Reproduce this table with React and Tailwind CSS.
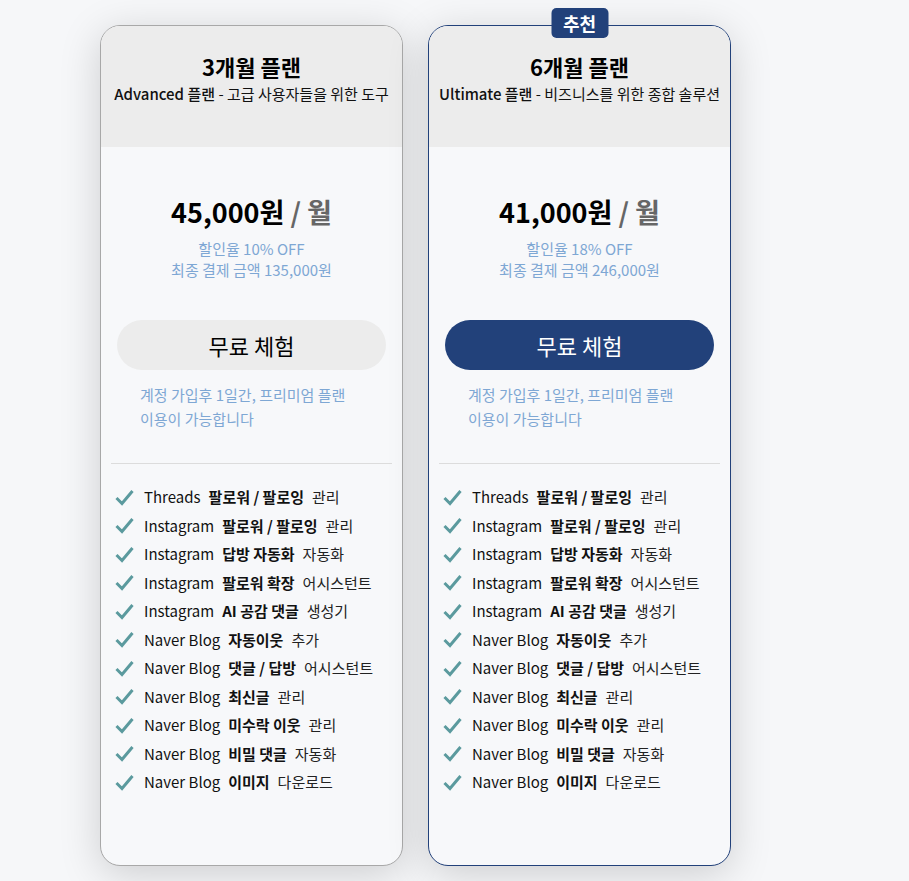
import React from "react";

const features = [
  ["Threads", "팔로워 / 팔로잉", "관리"],
  ["Instagram", "팔로워 / 팔로잉", "관리"],
  ["Instagram", "답방 자동화", "자동화"],
  ["Instagram", "팔로워 확장", "어시스턴트"],
  ["Instagram", "AI 공감 댓글", "생성기"],
  ["Naver Blog", "자동이웃", "추가"],
  ["Naver Blog", "댓글 / 답방", "어시스턴트"],
  ["Naver Blog", "최신글", "관리"],
  ["Naver Blog", "미수락 이웃", "관리"],
  ["Naver Blog", "비밀 댓글", "자동화"],
  ["Naver Blog", "이미지", "다운로드"],
];

const plans = [
  {
    title: "3개월 플랜",
    tier: "Advanced 플랜",
    desc: " - 고급 사용자들을 위한 도구",
    price: "45,000원",
    rate: "할인율 10% OFF",
    total: "최종 결제 금액 135,000원",
    featured: false,
  },
  {
    title: "6개월 플랜",
    tier: "Ultimate 플랜",
    desc: " - 비즈니스를 위한 종합 솔루션",
    price: "41,000원",
    rate: "할인율 18% OFF",
    total: "최종 결제 금액 246,000원",
    featured: true,
  },
];

function Check() {
  return (
    <svg width="19" height="17" viewBox="0 0 19 17" className="shrink-0">
      <polyline
        points="1.5,9 7,14.5 17.5,2"
        fill="none"
        stroke="#5b9a9e"
        strokeWidth="3"
      />
    </svg>
  );
}

function PlanCard({ plan }) {
  return (
    <div
      className={
        "relative w-[303px] h-[841px] shrink-0 rounded-[20px] border bg-[#f7f8fa] shadow-[0_8px_40px_rgba(0,0,0,0.17)] " +
        (plan.featured ? "border-[#22417a]" : "border-[#a8a8a8]")
      }
    >
      {plan.featured && (
        <div className="absolute left-1/2 -translate-x-1/2 -top-[18px] w-[57px] h-[30px] rounded-[5px] bg-[#22417a] text-white text-[18px] font-bold flex items-center justify-center">
          추천
        </div>
      )}

      <div className="h-[121px] bg-[#ececec] rounded-t-[19px] pt-[26px] flex flex-col items-center">
        <div className="text-[22px] leading-[28px] font-bold text-black">{plan.title}</div>
        <div className="mt-[3px] text-[15px] leading-[22px] text-[#111]">
          <span className="font-medium">{plan.tier}</span>
          {plan.desc}
        </div>
      </div>

      <div className="flex flex-col items-center pt-[47px]">
        <div className="text-[27px] leading-[36px] font-bold text-black">
          {plan.price} <span className="text-[#666]">/ 월</span>
        </div>
        <div className="mt-[8px] text-[15px] leading-[21px] text-[#7ea7d4] text-center">
          <div>{plan.rate}</div>
          <div>{plan.total}</div>
        </div>
      </div>

      <div className="px-[16px] mt-[40px]">
        <button
          className={
            "w-full h-[50px] rounded-full text-[22px] " +
            (plan.featured ? "bg-[#22417a] text-white" : "bg-[#ececec] text-black")
          }
        >
          무료 체험
        </button>
      </div>

      <div className="pl-[39px] mt-[13px] text-[15px] leading-[24px] text-[#7ea7d4]">
        <div>계정 가입후 1일간, 프리미엄 플랜</div>
        <div>이용이 가능합니다</div>
      </div>

      <div className="mx-[10px] mt-[32px] h-px bg-[#dcdcdc]" />

      <ul className="mt-[22px] pl-[14px] flex flex-col gap-[6px]">
        {features.map(([a, b, c], i) => (
          <li key={i} className="flex items-center h-[22.5px] text-[15px] text-[#111]">
            <Check />
            <span className="ml-[10px]">{a}</span>
            <span className="ml-[8px] font-bold">{b}</span>
            <span className="ml-[8px] text-[#222]">{c}</span>
          </li>
        ))}
      </ul>
    </div>
  );
}

export default function App() {
  return (
    <div
      className="w-[909px] h-[881px] overflow-hidden bg-[#f6f7f9] pl-[100px] pt-[25px] flex gap-[25px]"
      style={{ fontFamily: '"Noto Sans CJK KR", "Noto Sans", sans-serif' }}
    >
      {plans.map((p) => (
        <PlanCard key={p.title} plan={p} />
      ))}
    </div>
  );
}
